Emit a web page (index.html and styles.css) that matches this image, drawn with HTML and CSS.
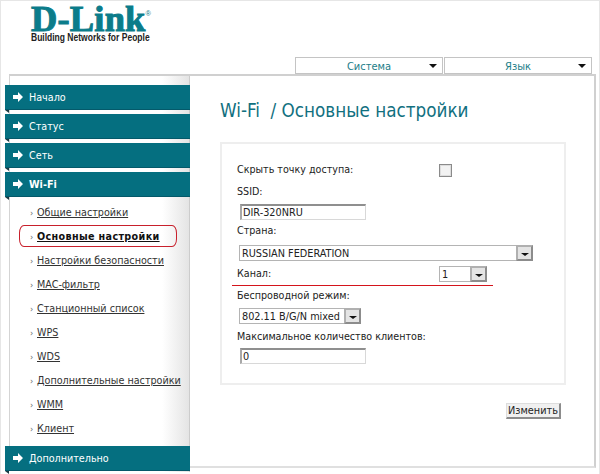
FILE: index.html
```html
<!DOCTYPE html>
<html lang="ru">
<head>
<meta charset="utf-8">
<title>D-Link</title>
<link rel="stylesheet" href="styles.css">
</head>
<body>
<div class="page">
  <header class="header">
    <div class="logo">
      <div class="logo-mark">D-Link<sup class="logo-reg">®</sup></div>
      <div class="logo-tag">Building Networks for People</div>
    </div>
    <nav class="topnav">
      <div class="topnav-item"><span>Система</span><i class="caret"></i></div>
      <div class="topnav-item"><span>Язык</span><i class="caret"></i></div>
    </nav>
  </header>
  <div class="main">
    <aside class="sidebar">
      <div class="bar"><svg class="bar-icon" viewBox="0 0 10 10"><polygon points="0,3 5,3 5,0 10,5 5,10 5,7 0,7"/></svg>Начало</div>
      <div class="bar"><svg class="bar-icon" viewBox="0 0 10 10"><polygon points="0,3 5,3 5,0 10,5 5,10 5,7 0,7"/></svg>Статус</div>
      <div class="bar"><svg class="bar-icon" viewBox="0 0 10 10"><polygon points="0,3 5,3 5,0 10,5 5,10 5,7 0,7"/></svg>Сеть</div>
      <div class="bar bar-active"><svg class="bar-icon" viewBox="0 0 10 10"><polygon points="0,3 5,3 5,0 10,5 5,10 5,7 0,7"/></svg>Wi-Fi</div>
      <ul class="submenu">
        <li><a>Общие настройки</a></li>
        <li class="current"><a>Основные настройки</a><span class="ring"></span></li>
        <li><a>Настройки безопасности</a></li>
        <li><a>MAC-фильтр</a></li>
        <li><a>Станционный список</a></li>
        <li><a>WPS</a></li>
        <li><a>WDS</a></li>
        <li><a>Дополнительные настройки</a></li>
        <li><a>WMM</a></li>
        <li><a>Клиент</a></li>
      </ul>
      <div class="bar bar-last"><svg class="bar-icon" viewBox="0 0 10 10"><polygon points="0,3 5,3 5,0 10,5 5,10 5,7 0,7"/></svg>Дополнительно</div>
    </aside>
    <section class="content">
      <h1 class="title">Wi-Fi&nbsp; / Основные настройки</h1>
      <div class="panel">
        <div class="row row-hide"><label class="row-label">Скрыть точку доступа:</label><span class="checkbox"></span></div>
        <label class="label label-ssid">SSID:</label>
        <div class="input input-ssid">DIR-320NRU</div>
        <label class="label label-country">Страна:</label>
        <div class="select select-country"><span class="select-text">RUSSIAN FEDERATION</span><span class="select-btn"><i class="caret"></i></span></div>
        <div class="row row-channel"><label class="row-label">Канал:</label><div class="select select-channel"><span class="select-text">1</span><span class="select-btn"><i class="caret"></i></span></div><span class="redline"></span></div>
        <label class="label label-mode">Беспроводной режим:</label>
        <div class="select select-mode"><span class="select-text">802.11 B/G/N mixed</span><span class="select-btn"><i class="caret"></i></span></div>
        <label class="label label-max">Максимальное количество клиентов:</label>
        <div class="input input-max">0</div>
      </div>
      <div class="actions"><button class="btn" type="button">Изменить</button></div>
    </section>
  </div>
</div>
</body>
</html>
```

FILE: styles.css
```css
* { box-sizing: border-box; }
html, body { margin: 0; padding: 0; }
body {
  width: 600px;
  height: 474px;
  overflow: hidden;
  background: #fff;
  font-family: "DejaVu Sans Condensed", "DejaVu Sans", sans-serif;
  font-stretch: condensed;
  color: #222;
}
.page {
  height: 474px;
  border: 1px solid #e6e6e6;
  border-bottom: 0;
}
.header {
  display: flex;
  justify-content: space-between;
  align-items: flex-end;
  height: 73px;
}
.logo {
  align-self: flex-start;
  margin-left: 30px;
  padding-top: 4px;
  width: 122px;
}
.logo-mark {
  font-family: "Liberation Serif", serif;
  font-weight: 700;
  font-size: 35px;
  line-height: 30px;
  color: #0b7c8a;
  letter-spacing: 0.2px;
  white-space: nowrap;
  -webkit-text-stroke: 1px #0b7c8a;
  transform: scaleX(1.04);
  transform-origin: left center;
}
.logo-reg {
  font-size: 7px;
  font-family: "Liberation Sans", sans-serif;
  font-weight: 400;
  line-height: 0;
  vertical-align: 15px;
  -webkit-text-stroke: 0;
}
.logo-tag {
  font-family: "Liberation Sans", sans-serif;
  font-weight: 700;
  font-size: 10.5px;
  line-height: 13px;
  margin-top: -4px;
  color: #222;
  white-space: nowrap;
  transform: scaleX(0.81);
  transform-origin: left center;
}
.topnav {
  display: flex;
  gap: 1px;
  margin-right: 7px;
}
.topnav-item {
  position: relative;
  width: 148px;
  height: 17px;
  border: 1px solid #c4c4c4;
  text-align: center;
  font-size: 11px;
  line-height: 15px;
  color: #1b7d88;
  padding-top: 1px;
}
.topnav-item .caret {
  position: absolute;
  right: 5px;
  top: 6px;
}
.caret {
  display: inline-block;
  width: 0;
  height: 0;
  border-left: 4px solid transparent;
  border-right: 4px solid transparent;
  border-top: 4px solid #111;
}
.main {
  display: flex;
  width: 587px;
  height: 394px;
  margin-left: 8px;
  border-top: 2px solid #d0d0d0;
  border-left: 1px solid #d4d4d4;
  border-right: 2px solid #d0d0d0;
  border-bottom: 2px solid #e0e0e0;
}
.sidebar {
  flex: none;
  width: 180px;
  height: 396px;
  padding-top: 9px;
  background: linear-gradient(to right, #fff 0, #fff 85%, #e4e4e4 100%);
  border-right: 1px solid #ccc;
  position: relative;
}
.bar {
  position: relative;
  display: flex;
  align-items: center;
  height: 25px;
  margin: 0 0 4px -5px;
  width: 185px;
  padding-left: 8px;
  background: #056f80;
  border-bottom: 1px solid #04596a;
  color: #fff;
  font-size: 10.7px;
}
.bar::after {
  content: "";
  position: absolute;
  left: 0;
  top: 25px;
  border-top: 3px solid #1c3a42;
  border-left: 4px solid transparent;
}
.bar-active { font-weight: 700; margin-bottom: 0; }
.bar-last { margin: 0 0 0 -5px; }
.bar-icon {
  flex: none;
  width: 10px;
  height: 10px;
  margin-right: 6px;
  fill: #fff;
}
.submenu {
  list-style: none;
  margin: 0;
  padding: 4px 0 5px 0;
  height: 249px;
}
.submenu li {
  position: relative;
  height: 24px;
  padding-left: 27px;
  font-size: 10.7px;
  line-height: 24px;
  color: #333;
  white-space: nowrap;
}
.submenu li::before {
  content: "›";
  position: absolute;
  left: 20px;
  top: 0;
  font-size: 9px;
  color: #666;
}
.submenu a {
  text-decoration: underline;
}
.current a { font-weight: 700; color: #111; letter-spacing: 0.35px; }
.ring {
  position: absolute;
  left: 9px;
  top: 0;
  width: 158px;
  height: 22px;
  border: 1px solid #c8202c;
  border-radius: 5px / 8px;
}
.content {
  flex: 1;
  padding-left: 30px;
  min-width: 0;
}
.title {
  margin: 0;
  height: 66px;
  padding-top: 22px;
  font-size: 18.7px;
  line-height: 26px;
  font-weight: 400;
  color: #11707f;
  white-space: nowrap;
}
.panel {
  display: flex;
  flex-direction: column;
  align-items: flex-start;
  width: 346px;
  height: 243px;
  padding: 18px 0 0 15px;
  border: 2px solid #eee;
  font-size: 10.65px;
}
.label, .row-label {
  display: block;
  height: 16px;
  line-height: 16px;
  color: #222;
  white-space: nowrap;
}
.row {
  position: relative;
  display: flex;
  align-items: center;
  height: 16px;
}
.row-label { width: 202px; }
.checkbox {
  display: block;
  width: 13px;
  height: 13px;
  background: #f2f2f2;
  border: 1px solid #8a8a8a;
  box-shadow: inset 0 0 0 1px #ddd;
}
.label-ssid { margin-top: 6px; }
.input {
  margin-top: 4px;
  margin-left: 3px;
  width: 126px;
  height: 16px;
  border: 1px solid #d8d8d8;
  border-top: 2px solid #8f8f8f;
  border-left: 2px solid #a8a8a8;
  background: #fff;
  line-height: 14px;
  padding-left: 1px;
  font-size: 10.8px;
}
.label-country { margin-top: 3px; }
.select {
  display: flex;
  justify-content: space-between;
  height: 16px;
  margin-left: 2px;
  border: 1px solid #b4b4b4;
  border-right-width: 0;
  background: #fff;
  font-size: 10.8px;
  line-height: 15px;
}
.select-text { padding-left: 2px; white-space: nowrap; }
.select-btn {
  flex: none;
  display: flex;
  align-items: center;
  justify-content: center;
  width: 17px;
  height: 16px;
  margin-top: -1px;
  background: #e4e4e4;
  border: 2px solid #8c8c8c;
  border-left-color: #b0b0b0;
  border-top-color: #b0b0b0;
}
.select-btn .caret { border-top-width: 3px; margin-top: 2px; }
.select-country { width: 294px; margin-top: 6px; }
.row-channel { margin-top: 5px; }
.select-channel { width: 48px; margin-left: 0; }
.redline {
  position: absolute;
  left: -5px;
  top: 19px;
  width: 261px;
  height: 1px;
  background: #d4141c;
}
.label-mode { margin-top: 6px; }
.select-mode { width: 122px; margin-top: 4px; }
.label-max { margin-top: 5px; }
.input-max { margin-top: 3px; }
.actions {
  display: flex;
  justify-content: flex-end;
  width: 341px;
  margin-top: 18px;
}
.btn {
  width: 55px;
  height: 16px;
  padding: 0;
  background: #f0f0f0;
  border: 1px solid #ddd;
  border-right: 2px solid #8c8c8c;
  border-bottom: 2px solid #8c8c8c;
  font-family: inherit;
  font-stretch: condensed;
  font-size: 10.8px;
  line-height: 12px;
  color: #222;
}
```
